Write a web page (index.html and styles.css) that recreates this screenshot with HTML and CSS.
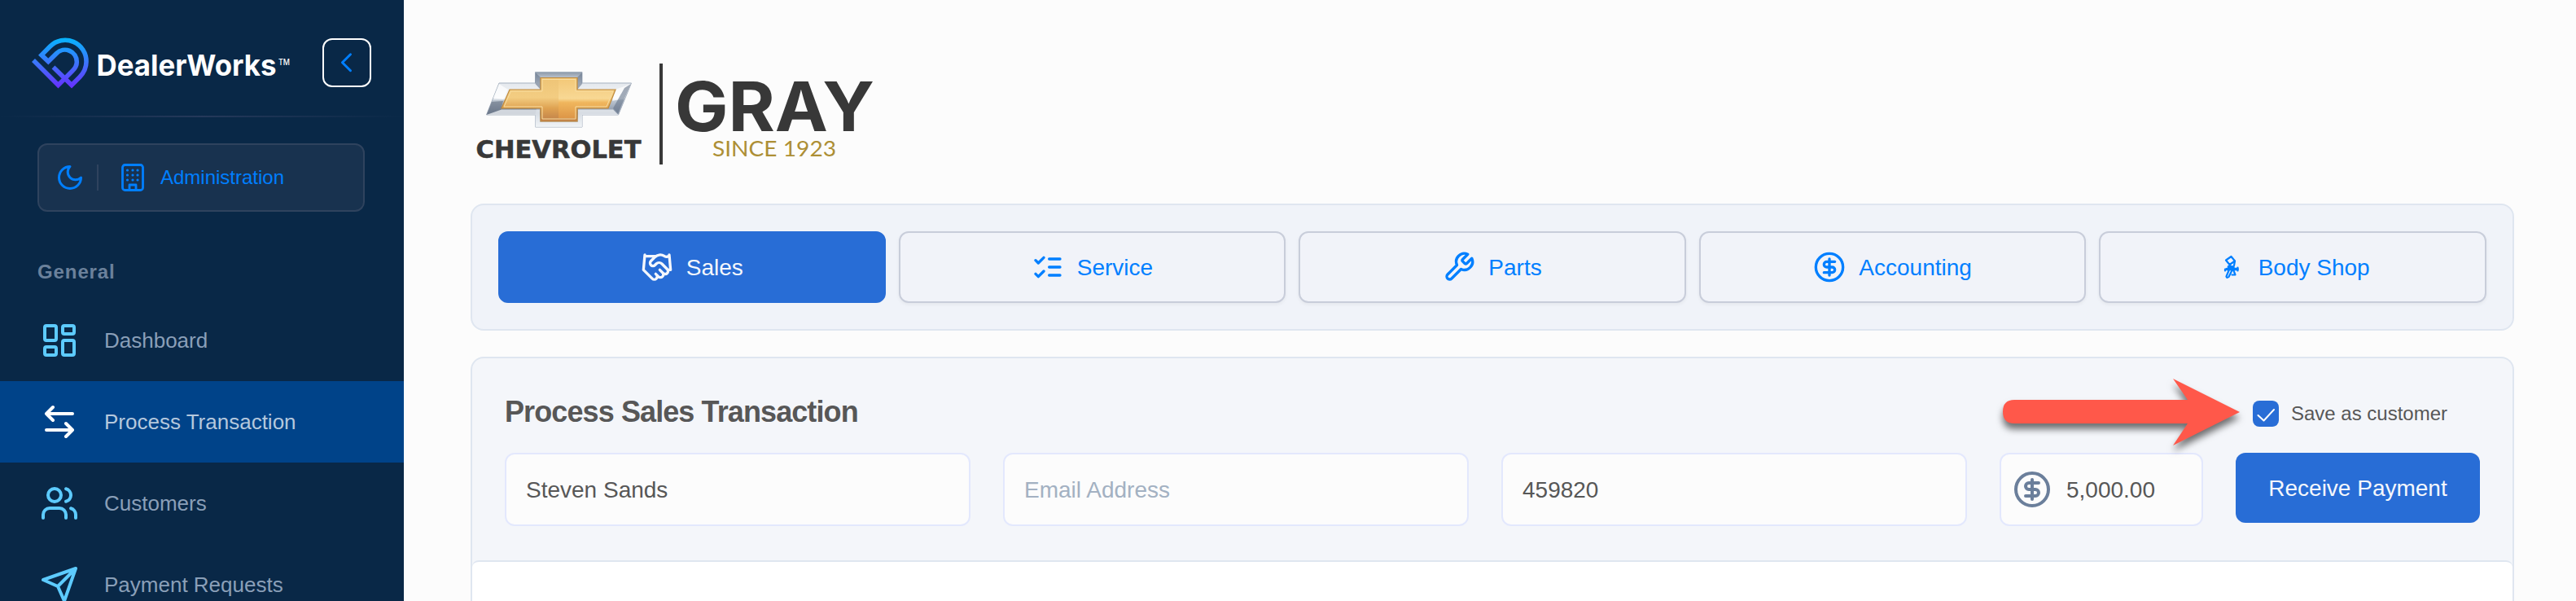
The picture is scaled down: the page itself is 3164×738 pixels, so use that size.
FILE: index.html
```
<!DOCTYPE html>
<html lang="en">
<head>
  <meta charset="UTF-8" />
  <meta name="viewport" content="width=device-width, initial-scale=1" />
  <title>Process Transaction</title>
  <link rel="stylesheet" href="styles.css">
</head>
<body>
  <aside class="sidebar">
    <div class="brand">
      <svg class="brand-logo" width="320" height="70" viewBox="38 43 320 70">
        <defs>
          <linearGradient id="mark" gradientUnits="userSpaceOnUse" x1="0" y1="46" x2="0" y2="109">
            <stop offset="0" stop-color="#05b6ff" />
            <stop offset="0.5" stop-color="#3d74fb" />
            <stop offset="1" stop-color="#6a2cff" />
          </linearGradient>
        </defs>
        <g fill="none" stroke="url(#mark)" stroke-width="5.6">
          <path d="M41 74 L71.500 104.500 L89 87 Q94.300 82 94.300 76 A14.500 14.500 0 0 0 69.500 65.500 L59.300 75.500 L51 67.600 L61.500 57 A26 26 0 0 1 106 76 Q106 86 98 94.500 L88 104.500 L65.500 82.500" />
        </g>
        <text class="brand-name" x="118.500" y="93" textLength="221" lengthAdjust="spacingAndGlyphs">DealerWorks</text>
        <text class="brand-tm" x="342" y="80" textLength="14" lengthAdjust="spacingAndGlyphs">TM</text>
      </svg>
      <button class="collapse-btn" aria-label="Collapse menu">
        <svg width="36" height="36" viewBox="0 0 24 24"><path d="m15 18.500-6.700-6.700L15 5.200" /></svg>
      </button>
    </div>

    <div class="account">
      <svg width="36" height="36" viewBox="0 0 24 24"><path d="M12 3a6 6 0 0 0 9 9 9 9 0 1 1-9-9Z" /></svg>
      <span class="account-sep"></span>
      <svg class="building" width="30" height="36" viewBox="0 0 30 36">
        <rect x="2.500" y="2.500" width="25" height="31" rx="3" />
        <path d="M11 33v-6h8v6" />
        <path class="dots" d="M8.500 9h.01M15 9h.01M21 9h.01M8.500 15h.01M15 15h.01M21 15h.01M8.500 21h.01M15 21h.01M21 21h.01" />
      </svg>
      <span class="account-name">Administration</span>
    </div>

    <div class="nav-title">General</div>
    <nav>
      <a class="nav-item">
        <svg width="48" height="48" viewBox="0 0 24 24"><rect x="3" y="3" width="7" height="9" rx="1" /><rect x="14" y="3" width="7" height="5" rx="1" /><rect x="14" y="12" width="7" height="9" rx="1" /><rect x="3" y="16" width="7" height="5" rx="1" /></svg>
        <span>Dashboard</span>
      </a>
      <a class="nav-item active">
        <svg width="48" height="48" viewBox="0 0 24 24"><path d="M8 3 4 7l4 4M4 7h16M16 21l4-4-4-4M20 17H4" /></svg>
        <span>Process Transaction</span>
      </a>
      <a class="nav-item">
        <svg width="48" height="48" viewBox="0 0 24 24"><path d="M16 21v-2a4 4 0 0 0-4-4H6a4 4 0 0 0-4 4v2" /><circle cx="9" cy="7" r="4" /><path d="M22 21v-2a4 4 0 0 0-3-3.870M16 3.130a4 4 0 0 1 0 7.750" /></svg>
        <span>Customers</span>
      </a>
      <a class="nav-item">
        <svg width="48" height="48" viewBox="0 0 24 24"><path d="m22 2-7 20-4-9-9-4ZM22 2 11 13" /></svg>
        <span>Payment Requests</span>
      </a>
    </nav>
  </aside>

  <main class="main">
    <div class="dealer">
      <svg width="500" height="134" viewBox="580 73 500 134">
        <defs>
          <linearGradient id="chrome" x1="0" y1="0" x2="0" y2="1">
            <stop offset="0" stop-color="#8c99a9" />
            <stop offset="0.2" stop-color="#e4e8ed" />
            <stop offset="0.48" stop-color="#f4f6f8" />
            <stop offset="0.52" stop-color="#bcc5d0" />
            <stop offset="0.75" stop-color="#8592a5" />
            <stop offset="1" stop-color="#e9edf2" />
          </linearGradient>
          <linearGradient id="gold" x1="0" y1="0" x2="0" y2="1">
            <stop offset="0" stop-color="#eec476" />
            <stop offset="0.45" stop-color="#f3cd82" />
            <stop offset="0.7" stop-color="#dfa251" />
            <stop offset="1" stop-color="#bf8049" />
          </linearGradient>
          <linearGradient id="goldLight" x1="0" y1="0" x2="0" y2="1">
            <stop offset="0" stop-color="#f3c878" />
            <stop offset="0.5" stop-color="#f8d894" />
            <stop offset="0.6" stop-color="#f0b65d" />
            <stop offset="1" stop-color="#dd9647" />
          </linearGradient>
        </defs>
        <path fill="url(#chrome)" stroke="#a7b2c0" d="M657.500 88.500H715V102H775.500L759.500 141H715V156H657.500V141H597.500L613 102H657.500Z" />
        <path fill="#536072" d="M597.500 141 616 132 659 133.500 657.500 141ZM597.500 141 604 125 618 124 616 132Z" opacity=".5" />
        <path fill="#f3f5f8" d="M597.500 141 616 134.500H663V150H710V134.500H753L759.500 141H715V156H657.500V141Z" opacity=".75" />
        <path fill="#fff" d="M613 103 624 110 618 122 606 120ZM775 103 756 110 752 124 767 121Z" opacity=".7" />
        <path fill="#66758a" d="M657.500 89 664 95V110L657.500 103ZM715 89 709 95V110L715 103ZM775 103 767 108 753 133 759 139Z" opacity=".6" />
        <path fill="url(#gold)" stroke="#c08a3c" stroke-width="1.200" d="M664 95.500H709V110H756L747 133H709V149H664V133H616L626 110H664Z" />
        <path fill="url(#goldLight)" d="M686 97H707V112H753L745 131H707V145H686Z" />
        <path fill="none" stroke="#f9dda0" d="M666 97.500H707V112H753L745 131H707V146H666V131H619L627.500 112H666Z" />
        <rect x="810" y="78" width="4" height="124" fill="#383838" />
        <text class="chevrolet" x="584.500" y="194" textLength="203" lengthAdjust="spacingAndGlyphs">CHEVROLET</text>
        <text class="gray" x="829" y="160.500" textLength="245" lengthAdjust="spacingAndGlyphs">GRAY</text>
        <text class="since" x="875" y="191.500" textLength="152" lengthAdjust="spacingAndGlyphs">SINCE 1923</text>
      </svg>
    </div>

    <div class="tabs">
      <button class="tab selected">
        <svg width="40" height="40" viewBox="0 0 24 24"><path d="m11 17 2 2a1 1 0 1 0 3-3M14 14l2.500 2.500a1 1 0 1 0 3-3l-3.880-3.880a3 3 0 0 0-4.240 0l-.88.88a1 1 0 1 1-3-3l2.810-2.810a5.790 5.790 0 0 1 7.060-.87l.47.28a2 2 0 0 0 1.420.25L21 4M21 3l1 11h-2M3 3 2 14l6.500 6.500a1 1 0 1 0 3-3M3 4h8" /></svg>
        <span>Sales</span>
      </button>
      <button class="tab">
        <svg width="40" height="40" viewBox="0 0 24 24"><path d="m3 17 2 2 4-4M3 7l2 2 4-4M13 6h8M13 12h8M13 18h8" /></svg>
        <span>Service</span>
      </button>
      <button class="tab">
        <svg width="40" height="40" viewBox="0 0 24 24"><path d="M14.700 6.300a1 1 0 0 0 0 1.400l1.600 1.600a1 1 0 0 0 1.400 0l3.770-3.770a6 6 0 0 1-7.940 7.940l-6.910 6.910a2.120 2.120 0 0 1-3-3l6.910-6.910a6 6 0 0 1 7.940-7.940l-3.760 3.760z" /></svg>
        <span>Parts</span>
      </button>
      <button class="tab">
        <svg width="40" height="40" viewBox="0 0 24 24"><circle cx="12" cy="12" r="10" /><path d="M16 8h-6a2 2 0 1 0 0 4h4a2 2 0 1 1 0 4H8M12 18V6" /></svg>
        <span>Accounting</span>
      </button>
      <button class="tab">
        <!-- spray gun -->
        <svg class="spray" width="40" height="40" viewBox="0 0 40 40">
          <path d="M16 11.500 22.500 7 27 12.500 20.500 17Z" />
          <path class="thick" d="M19.500 19.500 25 20M17 22.500H30" />
          <path d="M15 22.500V24.500M30.500 20.500V24.500M20 23 16.500 31.500Q17 34 19.500 32L23.500 24M21 17V20M27 12.500 26 18M25 23 27.500 29.500H23.500" />
        </svg>
        <span>Body Shop</span>
      </button>
    </div>

    <section class="form-card">
      <div class="form-head">
        <div class="form-title-row">
          <h2>Process Sales Transaction</h2>
          <div class="save-customer">
            <!-- callout arrow -->
            <svg class="pointer" width="310" height="110" viewBox="2450 455 310 110">
              <path d="M2474 491H2687L2669 465L2751 506L2669 547L2687 520H2474Q2460 520 2460 505.500T2474 491Z" />
            </svg>
            <span class="checkbox">
              <svg width="32" height="32" viewBox="0 0 32 32"><path d="M6.500 18 13.500 24.500 26 11" /></svg>
            </span>
            <label>Save as customer</label>
          </div>
        </div>
        <div class="fields">
          <input type="text" value="Steven Sands" aria-label="Name" />
          <input type="text" placeholder="Email Address" />
          <input type="text" value="459820" aria-label="Reference" />
          <div class="amount">
            <svg width="48" height="48" viewBox="0 0 24 24"><circle cx="12" cy="12" r="10" /><path d="M16 8h-6a2 2 0 1 0 0 4h4a2 2 0 1 1 0 4H8M12 18V6" /></svg>
            <span>5,000.00</span>
          </div>
          <button class="pay-btn">Receive Payment</button>
        </div>
      </div>
      <div class="form-body"></div>
    </section>
  </main>
</body>
</html>
```
FILE: styles.css
```
* {
  box-sizing: border-box;
}
body {
  margin: 0;
  height: 738px;
  overflow: hidden;
  display: flex;
  background: #fcfcfc;
  font-family: "Liberation Sans", Arial, sans-serif;
}
svg {
  display: block;
  flex-shrink: 0;
  fill: none;
  stroke: currentColor;
  stroke-width: 2;
  stroke-linecap: round;
  stroke-linejoin: round;
}
button {
  font-family: inherit;
}

/* sidebar */
.sidebar {
  width: 496px;
  flex-shrink: 0;
  background: #092847;
}
.brand {
  height: 144px;
  padding: 43px 40px 0 38px;
  display: flex;
  justify-content: space-between;
  align-items: flex-start;
  background: linear-gradient(to right, transparent, #25395a, transparent) bottom / 100% 2px no-repeat;
}
.brand-logo,
.dealer svg {
  stroke: none;
  stroke-width: 1;
  stroke-linecap: butt;
  stroke-linejoin: miter;
}
.brand-name {
  font: bold 36px Inter, sans-serif;
  fill: #fff;
}
.brand-tm {
  font: 500 10px Inter, sans-serif;
  fill: #fff;
}
.collapse-btn {
  width: 60px;
  height: 60px;
  margin-top: 4px;
  padding: 0;
  display: flex;
  align-items: center;
  justify-content: center;
  color: #007fff;
  background: none;
  border: 2px solid #fff;
  border-radius: 12px;
}
.account {
  height: 84px;
  margin: 32px 48px 0 46px;
  padding-left: 20px;
  display: flex;
  align-items: center;
  color: #007fff;
  background: #18324f;
  border: 2px solid #2f435e;
  border-radius: 12px;
}
.account-sep {
  width: 2px;
  height: 32px;
  margin: 0 27px 0 15px;
  background: #2f435e;
}
.building {
  stroke-width: 2.800;
}
.building .dots {
  stroke-width: 3.200;
}
.account-name {
  margin-left: 19px;
  font-size: 24px;
}
.nav-title {
  height: 108px;
  padding: 60px 0 0 46px;
  color: #6b819b;
  font-size: 24px;
  font-weight: bold;
  line-height: 28px;
  letter-spacing: 0.9px;
}
.nav-item {
  height: 100px;
  padding-left: 49px;
  display: flex;
  align-items: center;
  gap: 31px;
  color: #5dcbff;
  font-size: 26px;
}
.nav-item span {
  color: #8a9fb8;
}
.nav-item.active {
  color: #fff;
  background: #004389;
}
.nav-item.active span {
  color: #b5c8dd;
}

/* main column */
.main {
  flex: 1;
  padding: 0 76px 0 82px;
  display: flex;
  flex-direction: column;
}
.dealer {
  height: 250px;
  padding: 73px 0 0 2px;
  flex-shrink: 0;
}
.chevrolet {
  font: bold 29.500px "DejaVu Sans", sans-serif;
  fill: #383838;
  stroke: #383838;
  stroke-width: 0.5;
}
.gray {
  font: bold 84px Inter, sans-serif;
  fill: #383838;
}
.since {
  font: 27.500px Lato, sans-serif;
  fill: #ad8f35;
}
.tabs {
  height: 156px;
  padding: 32px;
  flex-shrink: 0;
  display: grid;
  grid-template-columns: repeat(5, 1fr);
  gap: 16px;
  background: #f0f3f9;
  border: 2px solid #dfe6f0;
  border-radius: 16px;
}
.tab {
  display: flex;
  align-items: center;
  justify-content: center;
  gap: 16px;
  color: #007fff;
  font-size: 28px;
  background: #f1f3f9;
  border: 2px solid #c8cdda;
  border-radius: 12px;
  box-shadow: 0 2px 4px rgba(0, 0, 0, 0.05);
}
.tab span {
  padding-top: 1px;
}
.tab.selected {
  color: #f4f7fc;
  background: #286dd6;
  border-color: #286dd6;
  box-shadow: none;
}
.spray {
  margin-left: -4px;
  stroke-width: 2.200;
}
.spray .thick {
  stroke-width: 3.600;
}

/* transaction form */
.form-card {
  flex: 1;
  margin-top: 32px;
  background: #f4f6fa;
  border: 2px solid #dfe6f0;
  border-bottom: 0;
  border-radius: 16px 16px 0 0;
}
.form-head {
  height: 248px;
  padding: 40px 40px 0;
}
.form-title-row {
  height: 76px;
  display: flex;
  justify-content: space-between;
}
h2 {
  margin: 4px 0 0;
  color: #575757;
  font-size: 36px;
  line-height: 44px;
  letter-spacing: -0.9px;
}
.save-customer {
  position: relative;
  height: 32px;
  margin: 12px 40px 0 0;
  display: flex;
  align-items: center;
  gap: 15px;
  color: #575757;
  font-size: 24px;
}
.pointer {
  position: absolute;
  left: -317px;
  top: -37px;
  fill: #ff584a;
  stroke: none;
  overflow: visible;
  filter: drop-shadow(0 7px 4px rgba(0, 0, 0, 0.55));
}
.checkbox {
  color: #fff;
  background: #286dd6;
  border-radius: 8px;
}
.fields {
  display: grid;
  grid-template-columns: repeat(3, 1fr) 250px 300px;
  gap: 40px;
}
.fields input,
.amount {
  width: 100%;
  height: 90px;
  padding: 1px 24px 0;
  color: #575757;
  font-family: inherit;
  font-size: 28px;
  background: #fcfcfc;
  border: 2px solid #e3e8fd;
  border-radius: 12px;
}
.fields input::placeholder {
  color: #a3b1c2;
}
.amount {
  padding: 0 14px;
  display: flex;
  align-items: center;
  gap: 18px;
}
.amount span {
  padding-top: 1px;
}
.amount svg {
  color: #6b7f9b;
}
.pay-btn {
  height: 86px;
  padding: 1px 0 0;
  color: #f4f7fc;
  font-size: 28px;
  background: #286dd6;
  border: 0;
  border-radius: 12px;
}
.form-body {
  height: 60px;
  background: #fff;
  border-top: 2px solid #dfe6f0;
  border-radius: 8px 8px 0 0;
}
```
